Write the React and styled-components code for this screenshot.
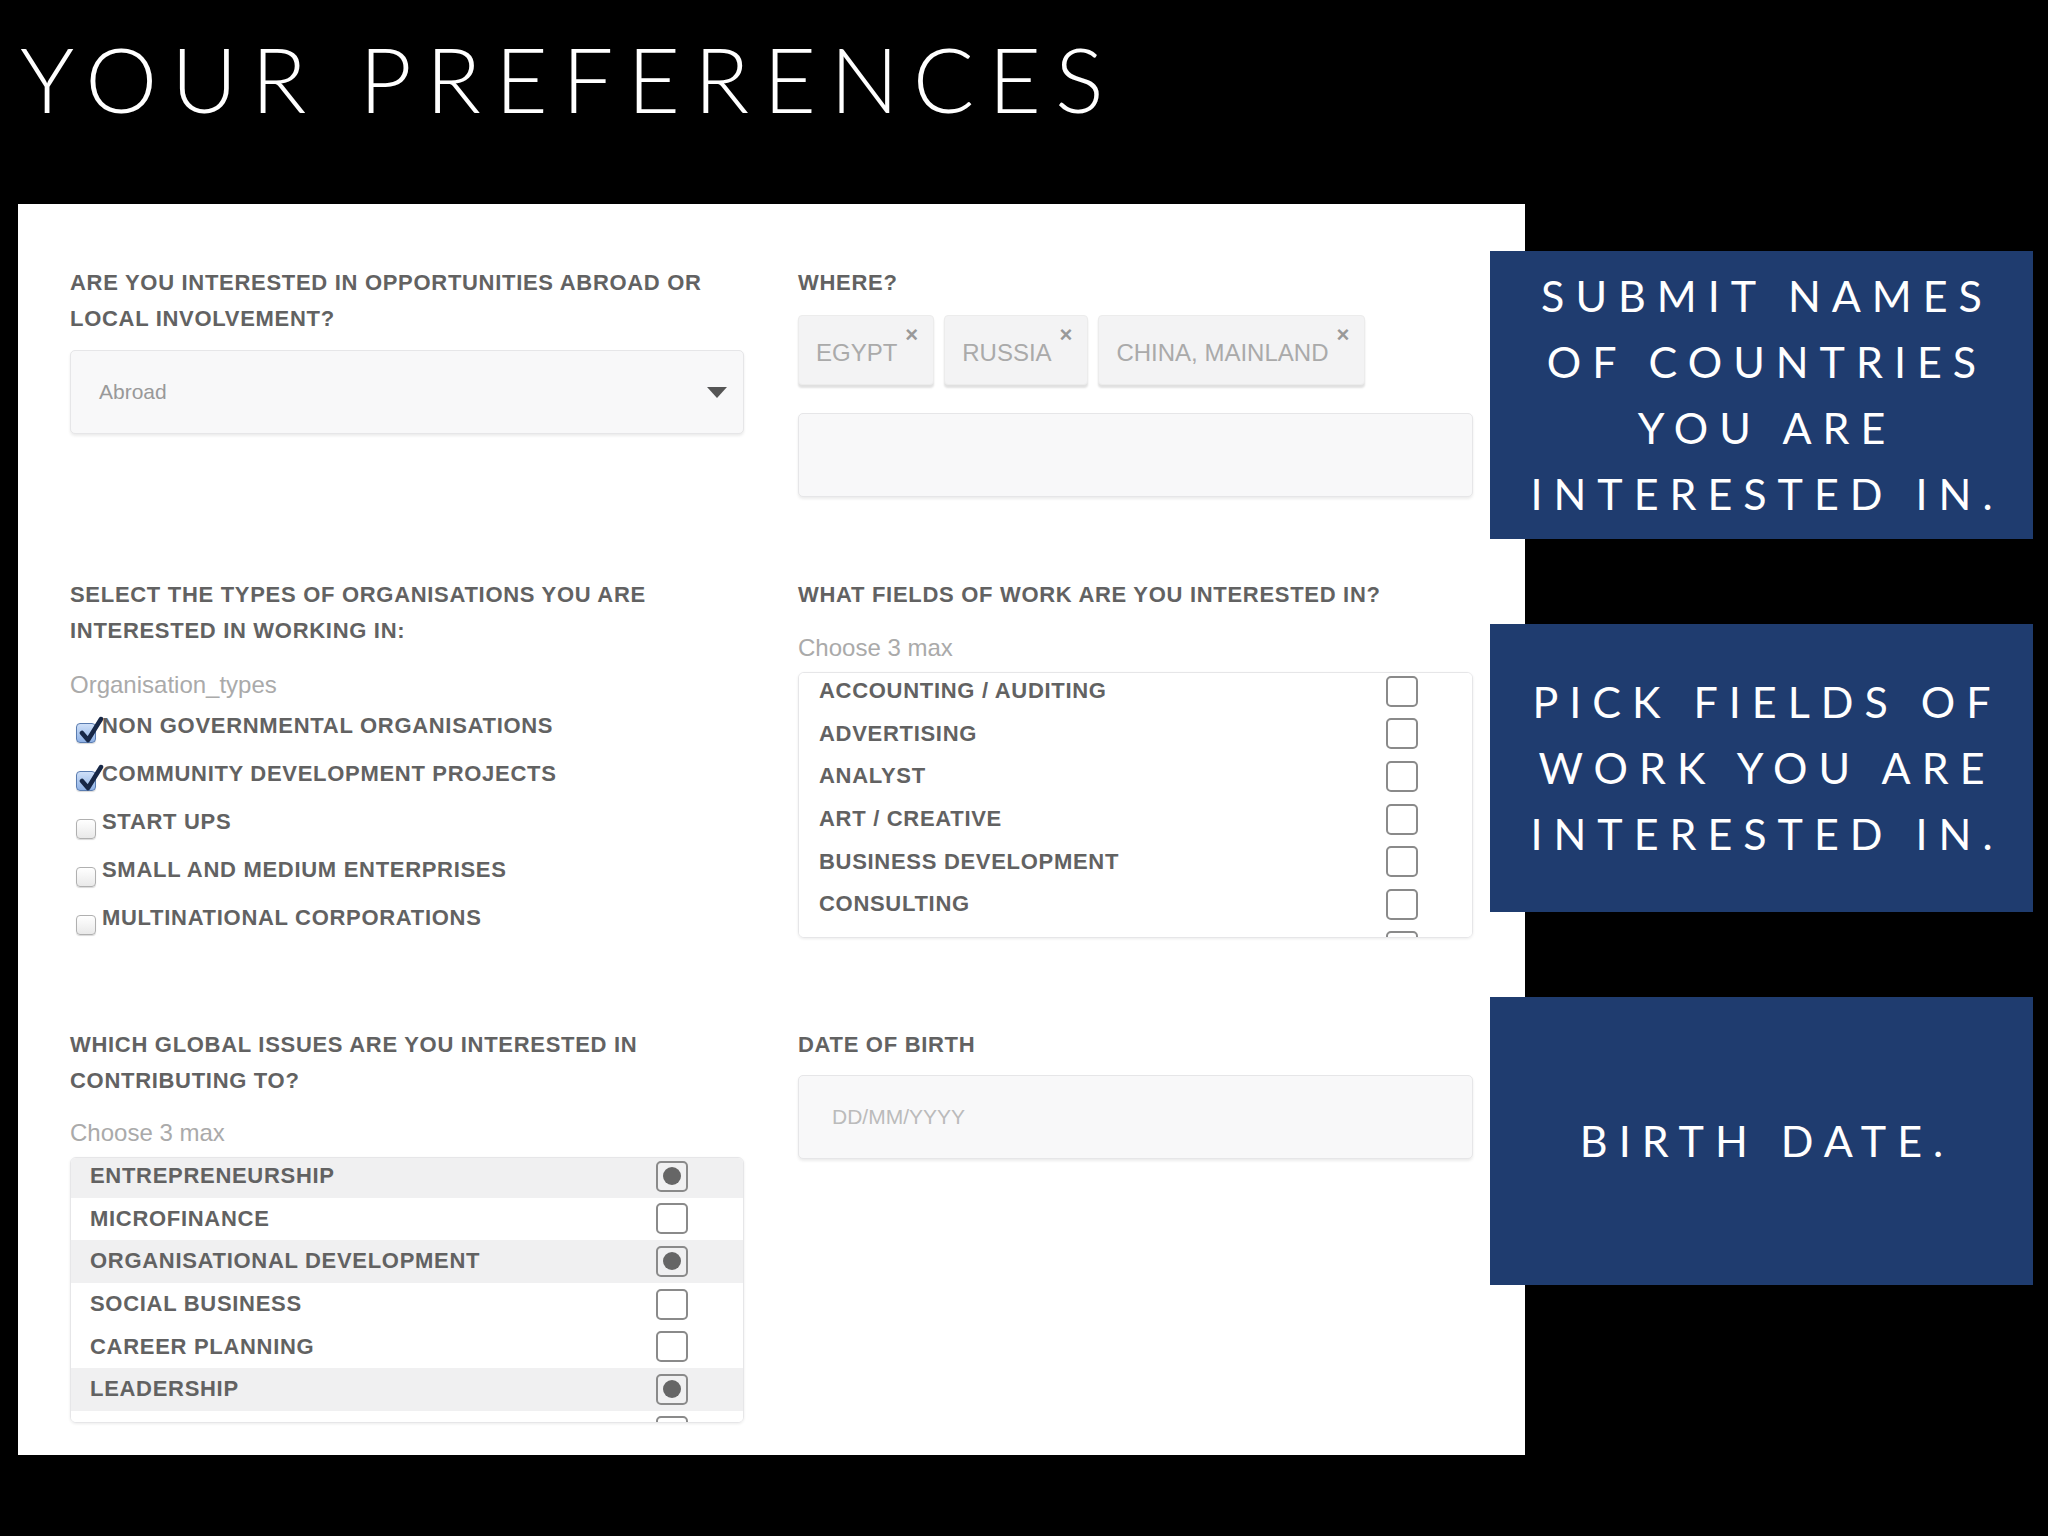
import React from 'react'
import styled, { createGlobalStyle } from 'styled-components'

const GlobalStyle = createGlobalStyle`
  body {
    margin: 0;
    background: #000;
    font-family: "Liberation Sans", Arial, sans-serif;
  }
`

const Page = styled.div`
  width: 2048px;
  height: 1536px;
  background: #000;
  overflow: hidden;
`

const Header = styled.h1`
  box-sizing: border-box;
  height: 204px;
  margin: 0;
  padding: 32px 0 0 20px;
  font-family: "Lato", "Open Sans", sans-serif;
  font-weight: 300;
  font-size: 91px;
  line-height: 91px;
  letter-spacing: 14px;
  color: #fff;
`

const Main = styled.div`
  display: flex;
  align-items: flex-start;
  padding-left: 18px;
`

const Panel = styled.div`
  box-sizing: border-box;
  width: 1507px;
  height: 1251px;
  background: #fff;
  padding: 61px 52px 0;
  display: grid;
  grid-template-columns: 674px 675px;
  column-gap: 54px;
  row-gap: 80px;
  align-content: start;
  align-items: start;
`

const Notes = styled.div`
  display: flex;
  flex-direction: column;
  gap: 85px;
  width: 543px;
  margin-left: -35px;
  padding-top: 47px;
  position: relative;
`

const Note = styled.div`
  height: 288px;
  background: #1f3c6f;
  display: flex;
  align-items: center;
  justify-content: center;
  text-align: center;
  font-family: "Lato", "Open Sans", sans-serif;
  font-weight: 400;
  font-size: 43px;
  line-height: 66px;
  letter-spacing: 11px;
  color: #fff;

  span {
    display: block;
    padding-left: 11px;
  }
`

const Field = styled.div`
  display: flex;
  flex-direction: column;
`

const Label = styled.div`
  font-weight: 700;
  font-size: 22px;
  line-height: 36px;
  letter-spacing: 0.7px;
  color: #626262;
  margin-bottom: ${p => p.$gap}px;
`

const Hint = styled.div`
  font-size: 24px;
  line-height: 34px;
  color: #aaa;
  margin-bottom: ${p => p.$gap || 0}px;
`

const Box = styled.div`
  box-sizing: border-box;
  height: 84px;
  background: #f8f8f9;
  border: 1px solid #e6e6e8;
  border-radius: 5px;
  box-shadow: 0 2px 3px rgba(0, 0, 0, 0.08);
  display: flex;
  align-items: center;
  justify-content: space-between;
  padding: 0 16px 0 ${p => p.$pad || 28}px;
  font-size: 21px;
  color: ${p => p.$color || '#999'};
`

const Tags = styled.div`
  display: flex;
  gap: 10px;
  margin-bottom: 28px;
`

const Tag = styled.div`
  box-sizing: border-box;
  height: 70px;
  display: flex;
  align-items: center;
  padding: 6px 15px 0 17px;
  background: #f3f3f4;
  border: 1px solid #ececec;
  border-radius: 4px;
  box-shadow: 0 3px 2px rgba(0, 0, 0, 0.12);
  font-size: 24px;
  color: #aaa;
`

const TagClose = styled.span`
  align-self: flex-start;
  margin: 2px 0 0 8px;
  font-size: 22px;
  font-weight: 700;
  line-height: 22px;
  color: #999;
`

const CheckGroup = styled.div`
  padding-bottom: 5px;
`

const CheckItem = styled.div`
  display: flex;
  align-items: center;
  height: 48px;
  padding-left: 6px;
  gap: 6px;
  font-weight: 700;
  font-size: 22px;
  letter-spacing: 0.7px;
  color: #626262;
`

const NativeBox = styled.span`
  position: relative;
  box-sizing: border-box;
  flex: none;
  width: 20px;
  height: 20px;
  margin-top: 14px;
  border-radius: 4px;
  border: 1px solid ${p => (p.$on ? '#5a7cb0' : '#b0b0b0')};
  background: ${p => (p.$on
    ? 'linear-gradient(#cfe0f8, #8fb2e6)'
    : 'linear-gradient(#ffffff, #e9e9e9)')};
  box-shadow: 0 1px 1px rgba(0, 0, 0, 0.15);

  svg {
    position: absolute;
    left: 2px;
    top: -8px;
  }
`

const List = styled.div`
  box-sizing: border-box;
  height: 266px;
  border: 1px solid #e6e6e8;
  border-radius: 6px;
  box-shadow: 0 1px 3px rgba(0, 0, 0, 0.08);
  overflow: hidden;
`

const ListBody = styled.div`
  margin-top: -3px;
`

const Row = styled.div`
  display: flex;
  align-items: center;
  justify-content: space-between;
  height: 42.6px;
  padding: 0 ${p => p.$right}px 0 ${p => p.$left}px;
  background: ${p => (p.$on ? '#f0f0f1' : '#fff')};
  font-weight: 700;
  font-size: 22px;
  letter-spacing: 0.7px;
  color: #626262;
`

const Square = styled.span`
  box-sizing: border-box;
  flex: none;
  width: 32px;
  height: 31px;
  margin-left: auto;
  border: 2px solid #8a8a8a;
  border-radius: 5px;
  display: flex;
  align-items: center;
  justify-content: center;

  &::after {
    content: '';
    display: ${p => (p.$on ? 'block' : 'none')};
    width: 18px;
    height: 18px;
    border-radius: 50%;
    background: #666;
  }
`

const Check = () => (
  <svg width="26" height="28" viewBox="0 0 26 28">
    <path d="M3 17 L9 24 L22 3" fill="none" stroke="#172746" strokeWidth="4.5" strokeLinecap="round" strokeLinejoin="round" />
  </svg>
)

const Arrow = () => (
  <svg width="20" height="11" viewBox="0 0 20 11">
    <path d="M0 0 H20 L10 11 Z" fill="#555" />
  </svg>
)

const orgTypes = [
  ['NON GOVERNMENTAL ORGANISATIONS', true],
  ['COMMUNITY DEVELOPMENT PROJECTS', true],
  ['START UPS', false],
  ['SMALL AND MEDIUM ENTERPRISES', false],
  ['MULTINATIONAL CORPORATIONS', false],
]

// last entry only peeks out at the bottom of the scroll box
const workFields = [
  'ACCOUNTING / AUDITING',
  'ADVERTISING',
  'ANALYST',
  'ART / CREATIVE',
  'BUSINESS DEVELOPMENT',
  'CONSULTING',
  '',
]

const issues = [
  ['ENTREPRENEURSHIP', true],
  ['MICROFINANCE', false],
  ['ORGANISATIONAL DEVELOPMENT', true],
  ['SOCIAL BUSINESS', false],
  ['CAREER PLANNING', false],
  ['LEADERSHIP', true],
  ['', false],
]

const notes = [
  ['SUBMIT NAMES', 'OF COUNTRIES', 'YOU ARE', 'INTERESTED IN.'],
  ['PICK FIELDS OF', 'WORK YOU ARE', 'INTERESTED IN.'],
  ['BIRTH DATE.'],
]

const App = () => (
  <Page>
    <GlobalStyle />
    <Header>YOUR PREFERENCES</Header>
    <Main>
      <Panel>
        <Field>
          <Label $gap={13}>ARE YOU INTERESTED IN OPPORTUNITIES ABROAD OR<br />LOCAL INVOLVEMENT?</Label>
          <Box>
            <span>Abroad</span>
            <Arrow />
          </Box>
        </Field>

        <Field>
          <Label $gap={14}>WHERE?</Label>
          <Tags>
            {['EGYPT', 'RUSSIA', 'CHINA, MAINLAND'].map(t => (
              <Tag key={t}>
                {t}
                <TagClose>×</TagClose>
              </Tag>
            ))}
          </Tags>
          <Box />
        </Field>

        <Field>
          <Label $gap={19}>SELECT THE TYPES OF ORGANISATIONS YOU ARE<br />INTERESTED IN WORKING IN:</Label>
          <Hint>Organisation_types</Hint>
          <CheckGroup>
            {orgTypes.map(([name, on]) => (
              <CheckItem key={name}>
                <NativeBox $on={on}>{on && <Check />}</NativeBox>
                {name}
              </CheckItem>
            ))}
          </CheckGroup>
        </Field>

        <Field>
          <Label $gap={18}>WHAT FIELDS OF WORK ARE YOU INTERESTED IN?</Label>
          <Hint $gap={7}>Choose 3 max</Hint>
          <List>
            <ListBody>
              {workFields.map((name, i) => (
                <Row key={i} $left={20} $right={54}>
                  {name}
                  <Square />
                </Row>
              ))}
            </ListBody>
          </List>
        </Field>

        <Field>
          <Label $gap={17}>WHICH GLOBAL ISSUES ARE YOU INTERESTED IN<br />CONTRIBUTING TO?</Label>
          <Hint $gap={7}>Choose 3 max</Hint>
          <List>
            <ListBody>
              {issues.map(([name, on], i) => (
                <Row key={i} $on={on} $left={19} $right={55}>
                  {name}
                  <Square $on={on} />
                </Row>
              ))}
            </ListBody>
          </List>
        </Field>

        <Field>
          <Label $gap={12}>DATE OF BIRTH</Label>
          <Box $pad={33} $color="#bbb">
            <span>DD/MM/YYYY</span>
          </Box>
        </Field>
      </Panel>

      <Notes>
        {notes.map((lines, i) => (
          <Note key={i}>
            <div>
              {lines.map(l => <span key={l}>{l}</span>)}
            </div>
          </Note>
        ))}
      </Notes>
    </Main>
  </Page>
)

export default App
